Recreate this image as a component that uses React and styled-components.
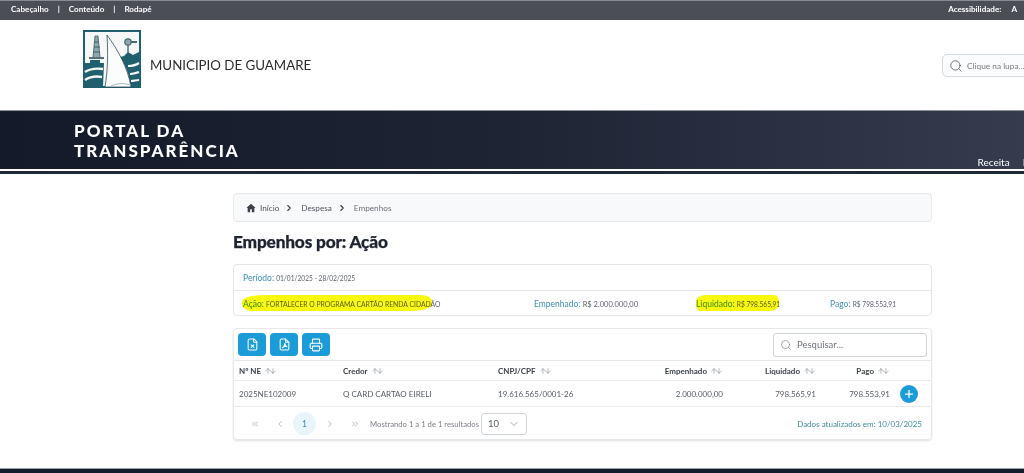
import React from "react";
import styled, { createGlobalStyle } from "styled-components";
import { ChevronRight, ChevronLeft, ChevronsLeft, ChevronsRight, ChevronDown, Search, Printer, FileX, Plus, ArrowUp, ArrowDown } from "lucide-react";

const GlobalStyle = createGlobalStyle`
  html, body {
    margin: 0;
    padding: 0;
    background: #fff;
    overflow: hidden;
  }
  * { box-sizing: border-box; }
  body {
    font-family: "Lato", "Liberation Sans", sans-serif;
    color: #555b66;
  }
`;

const Page = styled.div`
  width: 1024px;
  height: 473px;
  display: flex;
  flex-direction: column;
  overflow: hidden;
`;

const TopBar = styled.div`
  height: 20px;
  flex: none;
  background: #4c4e56;
  border-top: 1px solid #8a8b90;
  display: flex;
  align-items: center;
  justify-content: space-between;
  padding: 0 7px 4px 11px;
  color: #fff;
  font-size: 8.1px;
  font-weight: 700;
`;

const TopLinks = styled.div`
  display: flex;
  align-items: center;
  gap: 9px;
`;

const Access = styled.div`
  display: flex;
  gap: 10px;
`;

const Header = styled.header`
  height: 90px;
  flex: none;
  display: flex;
  align-items: center;
  padding: 0 0 0 83px;
`;

const LogoMark = styled.svg`
  flex: none;
  align-self: flex-start;
  margin-top: 10px;
`;

const BrandName = styled.div`
  margin-left: 9px;
  font-size: 13.3px;
  color: #2b2b2f;
`;

const HeaderSearch = styled.div`
  margin-left: auto;
  margin-right: -20px;
  margin-top: 1px;
  width: 102px;
  height: 23px;
  border: 1px solid #d5dae0;
  border-radius: 5px;
  background: #fbfcfd;
  display: flex;
  align-items: center;
  gap: 4px;
  padding-left: 6px;
  font-size: 8.3px;
  color: #777d86;
  white-space: nowrap;
`;

const Banner = styled.div`
  height: 59px;
  flex: none;
  background: linear-gradient(90deg, #141a2a 0%, #1d2434 50%, #343c4e 100%);
  border-top: 1px solid #8d929c;
  display: flex;
  justify-content: space-between;
  padding-left: 74px;
`;

const BannerTitle = styled.div`
  margin-top: 10px;
  color: #fff;
  font-size: 17px;
  line-height: 20px;
  font-weight: 900;
  letter-spacing: 2px;
`;

const BannerNav = styled.div`
  align-self: flex-end;
  display: flex;
  gap: 13px;
  color: #fff;
  font-size: 10px;
  white-space: nowrap;
  margin-right: -36px;
  margin-bottom: 1px;
`;

const BannerRule = styled.div`
  height: 5px;
  flex: none;
  background: #fff;
  border-bottom: 3px solid #20273a;
`;

const Main = styled.main`
  flex: 1;
  width: 699px;
  margin-left: 233px;
  padding-top: 19px;
`;

const Breadcrumb = styled.nav`
  height: 29px;
  background: #f8f9fa;
  border: 1px solid #e6e9ec;
  border-radius: 4px;
  display: flex;
  align-items: center;
  gap: 4px;
  padding-left: 12px;
  font-size: 8.2px;
  color: #4e545d;
`;

const Crumb = styled.span`
  color: ${(p) => (p.$muted ? "#6b7078" : "#4e545d")};
  margin-right: ${(p) => (p.$muted ? 0 : 1)}px;
`;

const CrumbArrow = styled(ChevronRight)`
  margin-right: 3px;
`;

const Title = styled.h1`
  margin: 10px 0 12px;
  height: 20px;
  font-size: 17.3px;
  line-height: 20px;
  font-weight: 900;
  color: #1e2330;
  letter-spacing: -0.2px;
  -webkit-text-stroke: 0.25px #1e2330;
`;

const InfoCard = styled.section`
  height: 52px;
  border: 1px solid #e4e7ea;
  border-radius: 4px;
`;

const InfoRow = styled.div`
  position: relative;
  height: 25px;
  padding-left: 9px;
  display: grid;
  align-items: center;
  grid-template-columns: ${(p) => p.$cols || "1fr"};
  font-size: 8.5px;
  color: #5c626b;
  & + & {
    height: 26px;
    border-top: 1px solid #e4e7ea;
  }
`;

const Label = styled.span`
  color: #3d8fb5;
`;

const Value = styled.span`
  font-size: ${(p) => p.$size || 6.6}px;
`;

const Marker = styled.span`
  position: absolute;
  left: ${(p) => p.$left}px;
  top: 4px;
  width: ${(p) => p.$width}px;
  height: 16px;
  background: #f8f810;
  border-radius: 12% 6% 12% 6% / 40%;
  mix-blend-mode: multiply;
`;

const TableCard = styled.section`
  margin-top: 12px;
  height: 112px;
  border: 1px solid #e6e8eb;
  border-radius: 4px;
  box-shadow: 0 1px 2px rgba(0, 0, 0, 0.12);
`;

const Toolbar = styled.div`
  height: 32px;
  display: flex;
  align-items: center;
  gap: 4px;
  padding: 0 4px;
  border-bottom: 1px solid #e6e8eb;
`;

const ToolButton = styled.button`
  width: 28px;
  height: 23px;
  padding: 0;
  border: 0;
  border-radius: 4px;
  background: #1b9bd7;
  color: #fff;
  display: flex;
  align-items: center;
  justify-content: center;
`;

const TableSearch = styled.div`
  margin-left: auto;
  width: 154px;
  height: 24px;
  border: 1px solid #cfd4d9;
  border-radius: 3px;
  display: flex;
  align-items: center;
  gap: 5px;
  padding-left: 6px;
  font-size: 9.5px;
  color: #6f747c;
`;

const TableGrid = styled.div`
  display: grid;
  grid-template-columns: 104px 155px 130px 95px 93px 74px 1fr;
  align-items: center;
  padding-left: 5px;
  height: ${(p) => (p.$head ? 20 : 26)}px;
  border-bottom: 1px solid #e9ebee;
  font-size: 8px;
  color: ${(p) => (p.$head ? "#3b404a" : "#555b66")};
  font-weight: ${(p) => (p.$head ? 700 : 400)};
`;

const Cell = styled.div`
  display: flex;
  align-items: center;
  gap: 3px;
  justify-content: ${(p) => (p.$right ? "flex-end" : "flex-start")};
  white-space: nowrap;
`;

const SortMark = styled.span`
  display: inline-flex;
  color: #6b7480;
  & > svg + svg {
    margin-left: -3px;
  }
`;

const AddButton = styled.button`
  width: 18px;
  height: 18px;
  margin-left: 10px;
  padding: 0;
  border: 0;
  border-radius: 50%;
  background: #1b9bd7;
  color: #fff;
  display: flex;
  align-items: center;
  justify-content: center;
`;

const Pager = styled.div`
  height: 33px;
  display: flex;
  align-items: center;
  padding: 0 9px 0 8px;
  font-size: 7.7px;
  color: #7a7f87;
`;

const PageIcon = styled.span`
  width: 25px;
  display: flex;
  justify-content: center;
  color: #a9aeb5;
`;

const PageCurrent = styled.span`
  width: 23px;
  height: 23px;
  margin: 0 1px;
  border-radius: 50%;
  background: #eaf5fb;
  color: #2b8fc0;
  font-size: 8.5px;
  display: flex;
  align-items: center;
  justify-content: center;
`;

const PageInfo = styled.span`
  margin-left: 3px;
  white-space: nowrap;
`;

const PageSize = styled.div`
  margin-left: 2px;
  width: 46px;
  height: 22px;
  border: 1px solid #cfd4d9;
  border-radius: 3px;
  display: flex;
  align-items: center;
  justify-content: space-between;
  padding: 0 6px;
  color: #555b66;
  font-size: 9.5px;
`;

const Updated = styled.span`
  margin-left: auto;
  font-size: 8px;
  color: #3f8ea0;
`;

const Footer = styled.footer`
  height: 5px;
  flex: none;
  background: #141b2b;
  border-top: 1px solid #9aa2ad;
`;

function Logo() {
  return (
    <LogoMark width="58" height="58" viewBox="0 0 58 58">
      <rect x="1" y="1" width="56" height="56" fill="#f6f8f7" stroke="#1f5f6e" strokeWidth="2" />
      {/* left water */}
      <path d="M2 33h5v-3h10v3h4l-1 24H2z" fill="#1f5f6e" />
      <path d="M2 42c6-4 11-4 18-3M2 50c6-4 11-4 17-3" stroke="#f6f8f7" strokeWidth="2.4" fill="none" />
      {/* oil tower */}
      <path d="M10 27 12 6h3l2 21" fill="#8fa6ab" stroke="#3f5f68" strokeWidth="0.8" />
      <path d="M11 12h5M11 17h6M10 22h7" stroke="#3f5f68" strokeWidth="1" />
      <path d="M6 28h15" stroke="#2d4c55" strokeWidth="1.6" />
      {/* right hill */}
      <path d="M37 27l4-1 4-4 5 3 6-3v34H47c0-10-4-20-10-29z" fill="#1f5f6e" />
      <path d="M45 36c4 0 8-1 11-3M47 44c3 0 6-1 9-2M48 51c3 0 5-1 8-1" stroke="#f6f8f7" strokeWidth="2.2" fill="none" />
      {/* windmill */}
      <path d="M45 13v10" stroke="#3f6c76" strokeWidth="1.4" />
      <circle cx="45" cy="12" r="3.2" fill="#8fa6ab" stroke="#3f6c76" strokeWidth="1.2" />
      <path d="M48 12h6" stroke="#3f6c76" strokeWidth="2" />
      {/* sail */}
      <path d="M24 5c11 15 21 33 24 52H22c3-17 3-35 2-52z" fill="#fbfcfc" stroke="#2d4c55" strokeWidth="0.8" />
      <path d="M28 56c7-3 12-3 20-1" stroke="#a6b8bc" strokeWidth="1" fill="none" />
    </LogoMark>
  );
}

function PdfIcon() {
  return (
    <svg width="13" height="13" viewBox="0 0 24 24" fill="none" stroke="currentColor" strokeWidth="1.9" strokeLinecap="round" strokeLinejoin="round">
      <path d="M14 2H6a2 2 0 0 0-2 2v16a2 2 0 0 0 2 2h12a2 2 0 0 0 2-2V8z" />
      <path d="M14 2v6h6" />
      <path d="M8 18c3-2 4.500-5 4.500-8 .5 3 2 5 4 6-3-.5-6 0-8.500 2z" />
    </svg>
  );
}

function Sort() {
  return (
    <SortMark>
      <ArrowUp size={8} strokeWidth={1.5} />
      <ArrowDown size={8} strokeWidth={1.5} />
    </SortMark>
  );
}

export default function App() {
  return (
    <Page>
      <GlobalStyle />
      <TopBar>
        <TopLinks>
          <span>Cabeçalho</span>
          <span>|</span>
          <span>Conteúdo</span>
          <span>|</span>
          <span>Rodapé</span>
        </TopLinks>
        <Access>
          <span>Acessibilidade:</span>
          <span>A</span>
        </Access>
      </TopBar>

      <Header>
        <Logo />
        <BrandName>MUNICIPIO DE GUAMARE</BrandName>
        <HeaderSearch>
          <Search size={14} strokeWidth={1.5} color="#5d646c" />
          Clique na lupa...
        </HeaderSearch>
      </Header>

      <Banner>
        <BannerTitle>
          PORTAL DA
          <br />
          TRANSPARÊNCIA
        </BannerTitle>
        <BannerNav>
          <span>Receita</span>
          <span>Despesa</span>
        </BannerNav>
      </Banner>
      <BannerRule />

      <Main>
        <Breadcrumb>
          <svg width="10" height="10" viewBox="0 0 24 24" fill="#3b4049">
            <path d="M12 2 1 12h3v10h6v-7h4v7h6V12h3z" />
          </svg>
          <Crumb>Início</Crumb>
          <CrumbArrow size={10} strokeWidth={2.6} color="#3b4049" />
          <Crumb>Despesa</Crumb>
          <CrumbArrow size={10} strokeWidth={2.6} color="#3b4049" />
          <Crumb $muted>Empenhos</Crumb>
        </Breadcrumb>

        <Title>Empenhos por: Ação</Title>

        <InfoCard>
          <InfoRow>
            <div>
              <Label>Período:</Label> <Value>01/01/2025 - 28/02/2025</Value>
            </div>
          </InfoRow>
          <InfoRow $cols="291px 162px 134px 1fr">
            <div>
              <Label>Ação:</Label> <Value $size={6.8}>FORTALECER O PROGRAMA CARTÃO RENDA CIDADÃO</Value>
            </div>
            <div>
              <Label>Empenhado:</Label> <Value $size={7.5}>R$ 2.000.000,00</Value>
            </div>
            <div>
              <Label>Liquidado:</Label> <Value>R$ 798.565,91</Value>
            </div>
            <div>
              <Label>Pago:</Label> <Value>R$ 798.553,91</Value>
            </div>
            <Marker $left={8} $width={190} />
            <Marker $left={462} $width={83} />
          </InfoRow>
        </InfoCard>

        <TableCard>
          <Toolbar>
            <ToolButton aria-label="Excel">
              <FileX size={13} strokeWidth={1.9} />
            </ToolButton>
            <ToolButton aria-label="PDF">
              <PdfIcon />
            </ToolButton>
            <ToolButton aria-label="Imprimir">
              <Printer size={14} strokeWidth={1.9} />
            </ToolButton>
            <TableSearch>
              <Search size={12} strokeWidth={1.5} color="#8b9098" />
              Pesquisar...
            </TableSearch>
          </Toolbar>

          <TableGrid $head>
            <Cell>Nº NE <Sort /></Cell>
            <Cell>Credor <Sort /></Cell>
            <Cell>CNPJ/CPF <Sort /></Cell>
            <Cell $right>Empenhado <Sort /></Cell>
            <Cell $right>Liquidado <Sort /></Cell>
            <Cell $right>Pago <Sort /></Cell>
          </TableGrid>
          <TableGrid>
            <Cell>2025NE102009</Cell>
            <Cell>Q CARD CARTAO EIRELI</Cell>
            <Cell>19.616.565/0001-26</Cell>
            <Cell $right>2.000.000,00</Cell>
            <Cell $right>798.565,91</Cell>
            <Cell $right>798.553,91</Cell>
            <Cell>
              <AddButton aria-label="Detalhes">
                <Plus size={12} strokeWidth={2.5} />
              </AddButton>
            </Cell>
          </TableGrid>

          <Pager>
            <PageIcon><ChevronsLeft size={10} /></PageIcon>
            <PageIcon><ChevronLeft size={10} /></PageIcon>
            <PageCurrent>1</PageCurrent>
            <PageIcon><ChevronRight size={10} /></PageIcon>
            <PageIcon><ChevronsRight size={10} /></PageIcon>
            <PageInfo>Mostrando 1 a 1 de 1 resultados</PageInfo>
            <PageSize>
              10
              <ChevronDown size={12} strokeWidth={1.5} color="#8b9098" />
            </PageSize>
            <Updated>Dados atualizados em: 10/03/2025</Updated>
          </Pager>
        </TableCard>
      </Main>

      <Footer />
    </Page>
  );
}
